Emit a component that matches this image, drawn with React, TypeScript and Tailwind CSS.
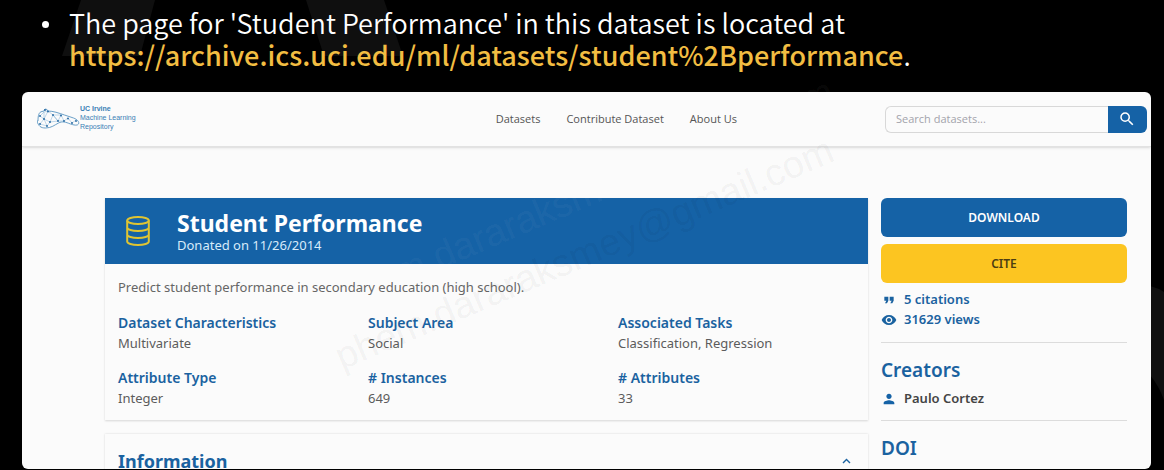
import type { ReactNode } from "react";
import { MdSearch, MdFormatQuote, MdVisibility, MdPerson } from "react-icons/md";

const facts = [
  { label: "Dataset Characteristics", value: "Multivariate" },
  { label: "Subject Area", value: "Social" },
  { label: "Associated Tasks", value: "Classification, Regression" },
  { label: "Attribute Type", value: "Integer" },
  { label: "# Instances", value: "649" },
  { label: "# Attributes", value: "33" },
];

function SlideBackdrop() {
  return (
    <svg className="absolute inset-0 h-full w-full" preserveAspectRatio="none" viewBox="0 0 1164 470" aria-hidden="true">
      <path d="M81 0h74l-15 56H62zM306 0h78l19 56h-79z" fill="#0f0f0f" />
      <path d="M1150 286q8 2 14 6v108q-5-14-14-25z" fill="#101010" />
    </svg>
  );
}

function AnteaterLogo() {
  return (
    <svg className="h-6 w-[43px]" viewBox="0 0 43 24" fill="none" stroke="#7fb0d4" strokeWidth="0.5" aria-hidden="true">
      <path
        strokeWidth="0.9"
        stroke="#5b96c2"
        d="M1 14C1 8 2 5 5 4.500l2-.5 1-2 2 .5.500 1.500c6 0 11 2 17 4l9 3c4 1.500 6 4 5 6-1 2-5 1-8 0-5-2-8-3-12-1-4 2-7 5-13 5-5 0-7-2-8.500-7z"
      />
      <path d="M3 9l4 3 4-8 5 4-3 7-6-3-4 5 7 2 3-4 8-1-5-6 8 0 3 6 4-3 4 5 4-3M7 12l3 7M16 8l5 6M11 4l-4 1-4 4M24 8l-3 6 6 0M7 12V5" />
      <g fill="#1f64a0" stroke="none">
        <circle cx="3" cy="9" r="0.900" /><circle cx="7" cy="12" r="0.900" /><circle cx="11" cy="4.500" r="0.900" />
        <circle cx="16" cy="8" r="0.900" /><circle cx="13" cy="15" r="0.900" /><circle cx="10" cy="19" r="0.900" />
        <circle cx="21" cy="14" r="0.900" /><circle cx="24" cy="8.500" r="0.900" /><circle cx="27" cy="14" r="0.900" />
        <circle cx="31" cy="11.500" r="0.900" /><circle cx="35" cy="16" r="0.900" /><circle cx="39" cy="14" r="0.900" />
        <circle cx="3" cy="17" r="0.900" /><circle cx="8" cy="3" r="0.900" />
      </g>
    </svg>
  );
}

function DatabaseIcon() {
  return (
    <svg className="h-8 w-6 shrink-0" viewBox="0 0 24 32" fill="none" stroke="#dfc432" strokeWidth="2" aria-hidden="true">
      <ellipse cx="12" cy="5.500" rx="10.800" ry="3.600" />
      <path d="M1.200 5.500v21c0 2 4.800 3.600 10.800 3.600s10.800-1.600 10.800-3.600v-21M1.200 12.500c0 2 4.800 3.600 10.800 3.600s10.800-1.600 10.800-3.600M1.200 19.500c0 2 4.800 3.600 10.800 3.600s10.800-1.600 10.800-3.600" />
    </svg>
  );
}

function StatLine({ icon, children }: { icon: ReactNode; children: ReactNode }) {
  return (
    <p className="flex h-5 items-center gap-[7px] text-[13px] font-semibold">
      {icon}
      {children}
    </p>
  );
}

export default function App() {
  return (
    <div className="relative flex h-screen flex-col overflow-hidden bg-black font-['Noto_Sans',sans-serif]">
      <SlideBackdrop />
      <ul className="relative pt-[7px] pl-[69px] font-['Noto_Sans_CJK_KR',sans-serif] text-[27px] leading-8 text-white">
        <li className="relative font-[350]">
          <span className="absolute top-[14px] -left-[27px] size-[7px] rounded-full bg-white" />
          The page for 'Student Performance' in this dataset is located at
          <br />
          <a
            className="font-medium text-[#f2bd42]"
            href="https://archive.ics.uci.edu/ml/datasets/student%2Bperformance"
          >
            https://archive.ics.uci.edu/ml/datasets/student%2Bperformance
          </a>
          .
        </li>
      </ul>

      <div className="relative mt-[21px] mr-[13px] mb-px ml-[22px] flex min-h-0 flex-1 flex-col overflow-hidden rounded-md bg-[#fbfbfb] text-[#1a62a0]">
        <header className="flex h-[55px] shrink-0 items-center justify-between border-b border-[#e2e2e2] pr-1 pl-[15px] shadow-sm">
          <a href="#home" className="flex items-center text-[#3a80b5]">
            <AnteaterLogo />
            <span className="pb-1 font-['Liberation_Sans',sans-serif] text-[7px] leading-[9px]">
              <b>UC Irvine</b>
              <br />
              Machine Learning
              <br />
              Repository
            </span>
          </a>
          <nav className="ml-[212px] flex gap-[26px] font-['Open_Sans',sans-serif] text-[11px] text-[#555]">
            <a href="#datasets">Datasets</a>
            <a href="#contribute">Contribute Dataset</a>
            <a href="#about">About Us</a>
          </nav>
          <form className="flex h-[27px] w-[262px]">
            <input
              aria-label="Search datasets"
              placeholder="Search datasets..."
              className="min-w-0 flex-1 rounded-l-md border border-r-0 border-[#d8d8d8] px-2.5 font-['Open_Sans',sans-serif] text-[11px] placeholder:text-[#a3a3ab]"
            />
            <button type="button" aria-label="Search" className="flex w-[39px] items-center justify-center rounded-r-md bg-[#1562a6] text-white">
              <MdSearch className="size-[18px]" />
            </button>
          </form>
        </header>

        <div className="flex gap-[13px] pt-[51px] pr-6 pl-[83px]">
          <main className="min-w-0 flex-1">
            <section className="shadow-[0_1px_2px_#00000026]">
              <div className="flex h-[66px] items-center gap-[27px] bg-[#1562a6] px-[21px] text-white">
                <DatabaseIcon />
                <div>
                  <h1 className="text-[23px] leading-7 font-bold">Student Performance</h1>
                  <p className="text-[13px] leading-4 text-[#d8ebfa]">Donated on 11/26/2014</p>
                </div>
              </div>
              <div className="px-[13px] pt-[13px] pb-3">
                <p className="text-[13px] leading-5 text-[#666]">
                  Predict student performance in secondary education (high school).
                </p>
                <dl className="mt-4 grid grid-cols-[250px_250px_1fr] gap-y-[15px]">
                  {facts.map((fact) => (
                    <div key={fact.label}>
                      <dt className="text-sm leading-5 font-semibold">{fact.label}</dt>
                      <dd className="text-[13px] leading-5 text-[#5c5c5c]">{fact.value}</dd>
                    </div>
                  ))}
                </dl>
              </div>
            </section>
            <section className="mt-[14px] shadow-[0_0_2px_#00000026]">
              <button type="button" className="flex w-full items-center justify-between px-[13px] pt-[11px] pb-6 text-left">
                <h2 className="text-lg leading-8 font-bold">Information</h2>
                <svg className="mr-1 h-2 w-[9px]" viewBox="0 0 9 8" fill="none" stroke="currentColor" strokeWidth="1.400" aria-hidden="true">
                  <path d="M1 6l3.500-3.500L8 6" />
                </svg>
              </button>
            </section>
          </main>

          <aside className="w-[246px] shrink-0">
            <button type="button" className="block h-[39px] w-full rounded-md bg-[#1562a6] text-xs font-semibold text-white">
              DOWNLOAD
            </button>
            <button type="button" className="mt-[7px] block h-[39px] w-full rounded-md bg-[#fcc521] text-xs font-semibold text-[#4d3d12]">
              CITE
            </button>
            <div className="mt-[7px]">
              <StatLine icon={<MdFormatQuote className="size-4" />}>5 citations</StatLine>
              <StatLine icon={<MdVisibility className="size-4" />}>31629 views</StatLine>
            </div>
            <section className="mt-3 border-t border-[#dcdcdc] pt-[11px]">
              <h2 className="text-[19px] leading-8 font-semibold">Creators</h2>
              <p className="mt-px flex h-6 items-center gap-[7px] text-[13px] font-semibold text-[#444]">
                <MdPerson className="size-4 text-[#1562a6]" />
                Paulo Cortez
              </p>
            </section>
            <section className="mt-[9px] border-t border-[#dcdcdc] pt-[11px]">
              <h2 className="text-[19px] leading-8 font-semibold">DOI</h2>
            </section>
          </aside>
        </div>
      </div>

      <svg className="pointer-events-none absolute inset-0 h-full w-full" viewBox="0 0 1164 470" aria-hidden="true">
        <g className="font-['Liberation_Sans',sans-serif] text-[38px]">
          <text transform="translate(342 370) rotate(-23)" fill="#000" fillOpacity="0.055">phem.dararaksmey@gmail.com</text>
          <text transform="translate(342 311) rotate(-23)" fill="#fff" fillOpacity="0.05">phem.dararaksmey@gmail.com</text>
        </g>
      </svg>
    </div>
  );
}
